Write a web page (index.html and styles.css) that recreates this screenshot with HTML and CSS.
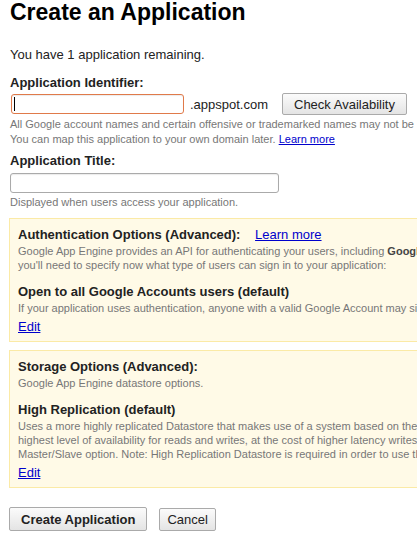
FILE: index.html
```html
<!DOCTYPE html>
<html lang="en">
<head>
    <meta charset="UTF-8">
    <meta name="viewport" content="width=device-width, initial-scale=1.0">
    <title>Create an Application</title>
    <link rel="stylesheet" href="styles.css">
</head>
<body>
    <div class="page">
        <h1>Create an Application</h1>
        <p class="remaining">You have 1 application remaining.</p>

        <form class="create-form" onsubmit="return false">
            <label class="field-label" for="app_id">Application Identifier:</label>
            <div class="id-row">
                <span class="id-field"><input type="text" id="app_id" class="text-input id-input" autofocus></span>
                <span class="suffix">.appspot.com</span>
                <button type="button" class="btn check-btn">Check Availability</button>
            </div>
            <div class="hint">All Google account names and certain offensive or trademarked names may not be used as Application Identifiers.</div>
            <div class="hint">You can map this application to your own domain later. <a href="#">Learn more</a></div>

            <label class="field-label title-label" for="app_title">Application Title:</label>
            <input type="text" id="app_title" class="text-input title-input">
            <div class="hint">Displayed when users access your application.</div>

            <div class="options">
                <div class="opt-head">Authentication Options (Advanced): <a href="#" class="opt-link">Learn more</a></div>
                <p class="opt-desc">Google App Engine provides an API for authenticating your users, including <b>Google Accounts</b>, Google Apps, and OpenID. If you choose to use this feature for some parts of your site,<br>you'll need to specify now what type of users can sign in to your application:</p>
                <div class="opt-head choice">Open to all Google Accounts users (default)</div>
                <p class="opt-desc">If your application uses authentication, anyone with a valid Google Account may sign in.</p>
                <div class="edit-row"><a href="#">Edit</a></div>
            </div>

            <div class="options">
                <div class="opt-head">Storage Options (Advanced):</div>
                <p class="opt-desc">Google App Engine datastore options.</p>
                <div class="opt-head choice">High Replication (default)</div>
                <p class="opt-desc">Uses a more highly replicated Datastore that makes use of a system based on the Paxos algorithm to synchronize data across multiple data centers. High Replication provides the<br>highest level of availability for reads and writes, at the cost of higher latency writes, and changes to consistency guarantees in the API. Recommended over the<br>Master/Slave option. Note: High Replication Datastore is required in order to use the Python 2.7 runtime.</p>
                <div class="edit-row"><a href="#">Edit</a></div>
            </div>

            <div class="actions">
                <button type="submit" class="btn create-btn">Create Application</button>
                <button type="button" class="btn cancel-btn">Cancel</button>
            </div>
        </form>
    </div>
</body>
</html>
```

FILE: styles.css
```css
html {
    overflow: hidden;
}
body {
    margin: 0;
    font-family: "Liberation Sans", Arial, sans-serif;
    font-size: 13px;
    color: #222;
    background: #fff;
}
a {
    color: #00c;
}
.page {
    width: 1000px;
    padding: 0 10px;
}
h1 {
    margin: 0;
    font-size: 23px;
    line-height: 24px;
    color: #000;
}
.remaining {
    margin: 23px 0 12px;
    line-height: 16px;
}
.field-label {
    display: block;
    font-weight: bold;
    line-height: 16px;
}
.title-label {
    margin-top: 6px;
}
.id-row {
    display: flex;
    align-items: center;
    margin-top: 2px;
    height: 22px;
}
.text-input {
    box-sizing: border-box;
    height: 20px;
    margin: 0;
    padding: 1px 3px;
    border: 1px solid #aaa;
    border-radius: 3px;
    font: 13px "Liberation Sans", Arial, sans-serif;
    box-shadow: inset 0 1px 1px rgba(0,0,0,0.08);
}
/* focused field with its text cursor */
.id-field {
    position: relative;
    display: flex;
    margin-left: 1px;
}
.id-field::after {
    content: "";
    position: absolute;
    left: 3px;
    top: 3px;
    width: 1px;
    height: 14px;
    background: #000;
}
.id-input {
    width: 173px;
    border-color: #e07a4a;
    outline: none;
    caret-color: transparent;
}
.title-input {
    display: block;
    width: 269px;
    margin-top: 4px;
}
.suffix {
    margin-left: 6px;
    width: 92px;
}
.btn {
    box-sizing: border-box;
    margin: 0;
    border: 1px solid #aaa;
    border-radius: 2px;
    background: linear-gradient(#fbfbfb, #e4e4e4);
    color: #222;
    font: 13px "Liberation Sans", Arial, sans-serif;
    cursor: pointer;
}
.check-btn {
    height: 22px;
    padding: 0 11px;
}
.hint {
    font-size: 11px;
    color: #777;
    line-height: 15px;
}
.id-row + .hint {
    margin-top: 2px;
}
.title-input + .hint {
    margin-top: 2px;
}
.options {
    margin: 8px 0 0 -1px;
    padding: 8px 8px 6px;
    border: 1px solid #fbeaa6;
    background: #fffae7;
}
.opt-head {
    font-weight: bold;
    line-height: 16px;
}
.opt-link {
    font-weight: normal;
    margin-left: 11px;
}
.opt-desc {
    margin: 1px 0 0;
    font-size: 11px;
    line-height: 14px;
    color: #777;
}
.opt-desc b {
    color: #444;
}
.choice {
    margin-top: 12px;
}
.edit-row {
    margin-top: 4px;
    line-height: 16px;
}
.actions {
    display: flex;
    align-items: flex-start;
    gap: 12px;
    margin: 19px 0 0 -1px;
}
.create-btn {
    height: 24px;
    padding: 0 11px;
    font-weight: bold;
}
.cancel-btn {
    height: 23px;
    padding: 0 7px;
    margin-top: 1px;
}
```
